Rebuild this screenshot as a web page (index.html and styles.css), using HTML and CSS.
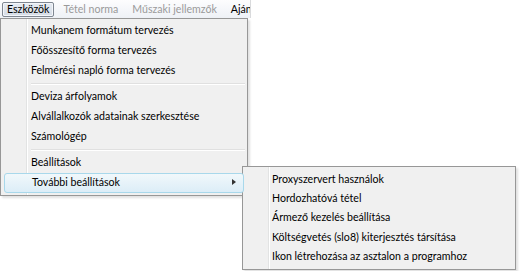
FILE: index.html
```html
<!DOCTYPE html>
<html lang="hu">
<head>
    <meta charset="UTF-8">
    <title>Eszközök menü</title>
    <link rel="stylesheet" href="styles.css">
</head>
<body>
    <!-- Menu bar -->
    <div class="menubar">
        <span class="menubar-item active">Eszközök</span>
        <span class="menubar-item disabled">Tétel norma</span>
        <span class="menubar-item disabled">Műszaki jellemzők</span>
        <span class="menubar-item">Aján</span>
    </div>

    <div class="menu-area">
        <!-- Eszközök dropdown -->
        <div class="menu">
            <div class="menu-item">Munkanem formátum tervezés</div>
            <div class="menu-item">Főösszesítő forma tervezés</div>
            <div class="menu-item">Felmérési napló forma tervezés</div>
            <div class="separator"></div>
            <div class="menu-item">Deviza árfolyamok</div>
            <div class="menu-item">Alvállalkozók adatainak szerkesztése</div>
            <div class="menu-item">Számológép</div>
            <div class="separator"></div>
            <div class="menu-item">Beállítások</div>
            <div class="menu-item hover">További beállítások<span class="arrow"></span></div>
        </div>

        <!-- További beállítások submenu -->
        <div class="menu submenu">
            <div class="menu-item">Proxyszervert használok</div>
            <div class="menu-item">Hordozhatóvá tétel</div>
            <div class="menu-item">Ármező kezelés beállítása</div>
            <div class="menu-item">Költségvetés (slo8) kiterjesztés társítása</div>
            <div class="menu-item">Ikon létrehozása az asztalon a programhoz</div>
        </div>
    </div>
</body>
</html>
```

FILE: styles.css
```css
html, body {
    min-height: 271px;
}
body {
    margin: 0;
    background: #fff;
    font-family: Lato, "Open Sans", sans-serif;
    font-size: 10.6px;
    color: #000;
}
.menubar {
    display: flex;
    align-items: center;
    gap: 4px;
    width: 248px;
    height: 18px;
    padding-left: 2px;
    background: linear-gradient(#fdfdfe, #eef1f6);
    border-right: 1px solid #d9dadc;
    overflow: hidden;
    white-space: nowrap;
}
.menubar-item {
    flex: none;
    padding: 0 4px;
    line-height: 13px;
    border: 1px solid transparent;
}
.menubar-item.active {
    border: 1px solid #7f8792;
    border-radius: 2px;
    background: linear-gradient(#e6ebf2, #d5dce6);
    box-shadow: inset 0 0 0 1px #f4f6fa;
}
.menubar-item.disabled {
    color: #9a9a9a;
}
.menu-area {
    display: flex;
    align-items: flex-start;
}
.menu {
    flex: none;
    width: 242px;
    padding: 2px;
    border: 1px solid #979797;
    background: #f0f0f0;
    background-image: linear-gradient(to right, transparent 25px, #e2e3e3 25px, #e2e3e3 26px, #fff 26px, #fff 27px, transparent 27px);
    box-shadow: 2px 2px 2px rgba(0, 0, 0, 0.12);
}
.menu-item {
    position: relative;
    height: 20px;
    line-height: 19px;
    padding-left: 28px;
    white-space: nowrap;
}
.menu-item.hover {
    margin: 0 1px;
    height: 18px;
    line-height: 16px;
    padding-left: 27px;
    border: 1px solid #a8d8eb;
    border-radius: 3px;
    background: linear-gradient(#f1f8fb, #dcedf7);
}
.arrow {
    position: absolute;
    right: 7px;
    top: 5px;
    border-left: 4px solid #333;
    border-top: 3.5px solid transparent;
    border-bottom: 3.5px solid transparent;
}
.separator {
    height: 1px;
    margin: 2px 0 2px 28px;
    background: #e0e0e0;
    border-bottom: 1px solid #fff;
}
.submenu {
    margin-top: 148px;
    margin-left: -6px;
    width: 268px;
    padding: 3px 2px;
}
.submenu .menu-item {
    height: 19.2px;
    line-height: 18.5px;
    padding-left: 27px;
}
```
